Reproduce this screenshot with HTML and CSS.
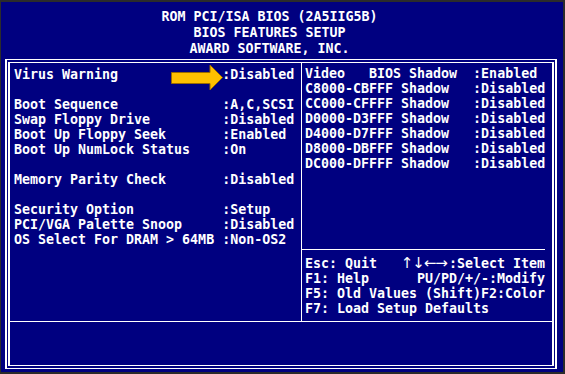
FILE: index.html
```html
<!DOCTYPE html>
<html lang="en">
<head>
    <meta charset="UTF-8">
    <title>BIOS Features Setup</title>
    <link rel="stylesheet" href="styles.css">
</head>
<body>
    <div class="screen">
        <header class="title">
            <div>ROM PCI/ISA BIOS (2A5IIG5B)</div>
            <div>BIOS FEATURES SETUP</div>
            <div>AWARD SOFTWARE, INC.</div>
        </header>

        <div class="frame">
            <div class="inner">
                <div class="top">
                    <div class="settings">
                        <div class="row"><span class="label">Virus Warning</span><span>:Disabled</span></div>
                        <div class="row"></div>
                        <div class="row"><span class="label">Boot Sequence</span><span>:A,C,SCSI</span></div>
                        <div class="row"><span class="label">Swap Floppy Drive</span><span>:Disabled</span></div>
                        <div class="row"><span class="label">Boot Up Floppy Seek</span><span>:Enabled</span></div>
                        <div class="row"><span class="label">Boot Up NumLock Status</span><span>:On</span></div>
                        <div class="row"></div>
                        <div class="row"><span class="label">Memory Parity Check</span><span>:Disabled</span></div>
                        <div class="row"></div>
                        <div class="row"><span class="label">Security Option</span><span>:Setup</span></div>
                        <div class="row"><span class="label">PCI/VGA Palette Snoop</span><span>:Disabled</span></div>
                        <div class="row"><span class="label">OS Select For DRAM &gt; 64MB</span><span>:Non-OS2</span></div>
                    </div>

                    <div class="side">
                        <div class="shadows">
                            <div class="row"><span class="label wide">Video   BIOS Shadow</span><span>:Enabled</span></div>
                            <div class="row"><span class="label wide">C8000-CBFFF Shadow</span><span>:Disabled</span></div>
                            <div class="row"><span class="label wide">CC000-CFFFF Shadow</span><span>:Disabled</span></div>
                            <div class="row"><span class="label wide">D0000-D3FFF Shadow</span><span>:Disabled</span></div>
                            <div class="row"><span class="label wide">D4000-D7FFF Shadow</span><span>:Disabled</span></div>
                            <div class="row"><span class="label wide">D8000-DBFFF Shadow</span><span>:Disabled</span></div>
                            <div class="row"><span class="label wide">DC000-DFFFF Shadow</span><span>:Disabled</span></div>
                        </div>
                        <div class="help">
                            <div class="row split"><span>Esc: Quit</span><span><span class="arrows">↑↓←→</span>:Select Item</span></div>
                            <div class="row split"><span>F1: Help</span><span>PU/PD/+/-:Modify</span></div>
                            <div class="row split"><span>F5: Old Values</span><span>(Shift)F2:Color</span></div>
                            <div class="row"><span>F7: Load Setup Defaults</span></div>
                        </div>
                    </div>
                </div>
                <div class="status"></div>
            </div>
        </div>

        <!-- pointer drawn over the first option -->
        <svg class="pointer" width="53" height="28" viewBox="0 0 53 28">
            <path d="M0.5 8.5 H39 V1 L51.5 13.5 L39 26 V19.5 H0.5 Z" fill="#ffc000" stroke="#9a6a00" stroke-width="1"/>
        </svg>
    </div>
</body>
</html>
```

FILE: styles.css
```css
body {
    margin: 0;
    background-color: #2b2b2b;
}
.screen {
    position: relative;
    box-sizing: border-box;
    width: 565px;
    height: 374px;
    background-color: #000080;
    border-style: solid;
    border-color: #2b2b2b;
    border-width: 2px 2px 2px 1px;
    color: #ffffff;
    font-family: 'DejaVu Sans Mono', 'Liberation Mono', monospace;
    font-weight: bold;
    font-size: 13.3px;
}
.title {
    box-sizing: border-box;
    height: 57px;
    padding: 7px 25px 0 0;
    line-height: 16px;
    text-align: center;
}
.frame {
    margin: 0 6px 0 4px;
    padding: 2px 1px;
    border-style: solid;
    border-color: #ffffff;
    border-width: 1px 2px;
}
.inner {
    border-style: solid;
    border-color: #ffffff;
    border-width: 1px 2px;
}
.top {
    display: flex;
    height: 258px;
}
.settings {
    box-sizing: border-box;
    width: 291px;
    padding: 4px 0 0 4px;
}
.side {
    flex: 1;
    display: flex;
    flex-direction: column;
    border-left: 1px solid #ffffff;
}
.shadows {
    flex: 1;
    padding: 3px 0 0 3px;
}
.help {
    box-sizing: border-box;
    height: 72px;
    width: 243px;
    padding: 6px 0 0 3px;
    border-top: 1px solid #ffffff;
}
.row {
    display: flex;
    height: 15px;
    line-height: 15px;
    white-space: pre;
}
.split {
    justify-content: space-between;
}
.label {
    width: 26ch;
}
.label.wide {
    width: 21ch;
}
.arrows {
    font-family: 'DejaVu Sans', sans-serif;
    font-weight: normal;
    font-size: 15px;
    letter-spacing: -1px;
    margin-right: 2px;
}
.status {
    height: 43px;
    border-top: 1px solid #ffffff;
}
.pointer {
    position: absolute;
    left: 170px;
    top: 62px;
}
```
